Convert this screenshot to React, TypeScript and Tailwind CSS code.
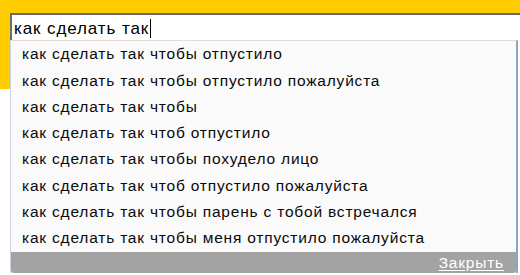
const suggestions = [
  "как сделать так чтобы отпустило",
  "как сделать так чтобы отпустило пожалуйста",
  "как сделать так чтобы",
  "как сделать так чтоб отпустило",
  "как сделать так чтобы похудело лицо",
  "как сделать так чтоб отпустило пожалуйста",
  "как сделать так чтобы парень с тобой встречался",
  "как сделать так чтобы меня отпустило пожалуйста",
];

const App = () => {
  return (
    <div className="relative w-[520px] h-[275px] bg-white overflow-hidden font-['Liberation_Sans',Arial,sans-serif]">
      {/* yellow header with search field */}
      <div className="h-[89px] bg-[#ffcc00] pt-[13px] pl-[10px]">
        <div className="h-[28px] bg-white border-t-2 border-l-2 border-[#6b6b6b] flex items-center pl-[2px]">
          <span className="text-[17px] tracking-[0.9px] text-black leading-none">как сделать так</span>
          <span className="w-px h-[19px] bg-black ml-[1px]" />
        </div>
      </div>

      {/* suggestions */}
      <div className="absolute left-[10px] top-[40px] w-[510px] pr-[2px] bg-white">
        <div className="border-l border-l-[#c9d3e0] border-r-2 border-r-[#90a4bf] border-t border-t-[#e3dcd8] bg-[#fafafa]">
          <ul className="flex flex-col">
            {suggestions.map((s) => (
              <li key={s} className="h-[26.25px] flex items-center pl-[11px] text-[15.5px] tracking-[0.8px] text-[#0a0a0a] leading-none">
                {s}
              </li>
            ))}
          </ul>
          <div className="h-[21px] mt-[1px] bg-[#a3a3a3] rounded-bl-[3px] rounded-br-[3px] flex items-center justify-end pr-[12px]">
            <a href="#" className="text-white text-[15.5px] tracking-[0.8px] underline underline-offset-2 leading-none">
              Закрыть
            </a>
          </div>
        </div>
      </div>
    </div>
  );
};

export default App;
